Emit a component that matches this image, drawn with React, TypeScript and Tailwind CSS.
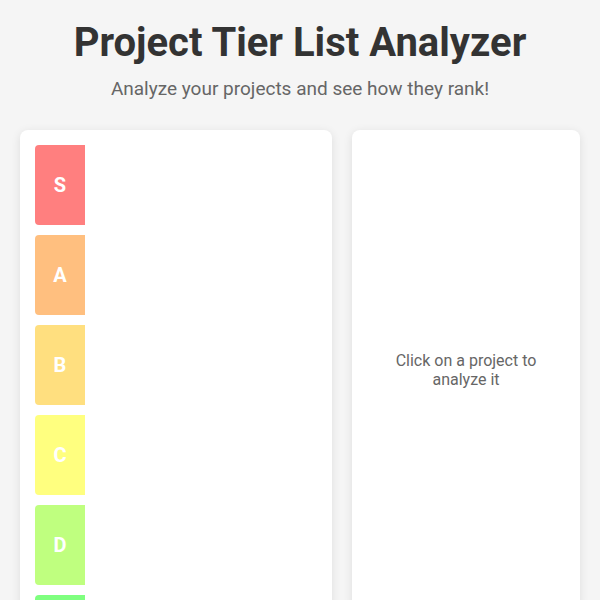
const tiers = [
  { label: 'S', color: 'bg-[#ff7f7f]' },
  { label: 'A', color: 'bg-[#ffbf7f]' },
  { label: 'B', color: 'bg-[#ffdf7f]' },
  { label: 'C', color: 'bg-[#ffff7f]' },
  { label: 'D', color: 'bg-[#bfff7f]' },
  { label: 'E', color: 'bg-[#7fff7f]' },
]

function TierRow({ label, color }: { label: string; color: string }) {
  return (
    <div className="flex h-[80px]">
      <div className={`${color} w-[50px] shrink-0 rounded-l-[4px] flex items-center justify-center text-white text-[20px] font-bold`}>
        {label}
      </div>
      <div className="flex-1" />
    </div>
  )
}

export default function App() {
  return (
    <div className="min-h-screen bg-[#f5f5f5] px-[20px] pt-[19px] pb-[20px] font-['Roboto','Liberation_Sans',sans-serif]">
      <h1 className="text-center text-[40px] leading-[48px] font-bold text-[#333]">
        Project Tier List Analyzer
      </h1>
      <p className="mt-[8px] text-center text-[19px] leading-[27px] text-[#666]">
        Analyze your projects and see how they rank!
      </p>

      <div className="mt-[28px] grid grid-cols-[1fr_228px] gap-[20px] items-start">
        <div className="bg-white rounded-[8px] shadow-[0_2px_10px_rgba(0,0,0,0.1)] p-[15px] flex flex-col gap-[10px]">
          {tiers.map(t => <TierRow key={t.label} {...t} />)}
        </div>

        <div className="bg-white rounded-[8px] shadow-[0_2px_10px_rgba(0,0,0,0.1)] h-[480px] px-[20px] flex items-center justify-center">
          <p className="text-center text-[16px] leading-[19px] text-[#666]">
            Click on a project to analyze it
          </p>
        </div>
      </div>
    </div>
  )
}
